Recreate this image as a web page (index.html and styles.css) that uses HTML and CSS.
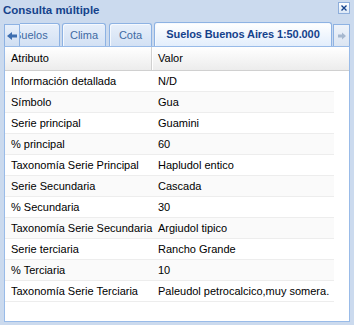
FILE: index.html
```html
<!DOCTYPE html>
<html lang="es">
<head>
<meta charset="utf-8">
<title>Consulta múltiple</title>
<link rel="stylesheet" href="styles.css">
</head>
<body>
<div class="win">
  <div class="titlebar">
    <span class="title">Consulta múltiple</span>
    <span class="close"><svg width="12" height="12" viewBox="0 0 12 12"><path d="M3 3 L9 9 M9 3 L3 9" stroke="#15428b" stroke-width="1.6" fill="none"/></svg></span>
  </div>
  <div class="tabbar">
    <div class="scroller left"><svg width="12" height="10" viewBox="0 0 12 10"><path d="M1 5 L6 1 L6 3.5 L11 3.5 L11 6.5 L6 6.5 L6 9 Z" fill="#3d6eb0"/></svg></div>
    <div class="tabs">
      <div class="tab first">Suelos</div>
      <div class="tab clima">Clima</div>
      <div class="tab cota">Cota</div>
      <div class="tab active">Suelos Buenos Aires 1:50.000</div>
    </div>
    <div class="scroller right"><svg width="10" height="10" viewBox="0 0 10 10"><path d="M9 5 L5 1.5 L5 3.5 L1 3.5 L1 6.5 L5 6.5 L5 8.5 Z" fill="#a6b8cf"/></svg></div>
  </div>
  <div class="body">
    <div class="ghead">
      <div class="c1">Atributo</div>
      <div class="c2">Valor</div>
    </div>
    <div class="rows">
      <div class="row"><div class="c1">Información detallada</div><div class="c2">N/D</div></div>
      <div class="row alt"><div class="c1">Símbolo</div><div class="c2">Gua</div></div>
      <div class="row"><div class="c1">Serie principal</div><div class="c2">Guamini</div></div>
      <div class="row alt"><div class="c1">% principal</div><div class="c2">60</div></div>
      <div class="row"><div class="c1">Taxonomía Serie Principal</div><div class="c2">Hapludol entico</div></div>
      <div class="row alt"><div class="c1">Serie Secundaria</div><div class="c2">Cascada</div></div>
      <div class="row"><div class="c1">% Secundaria</div><div class="c2">30</div></div>
      <div class="row alt"><div class="c1">Taxonomía Serie Secundaria</div><div class="c2">Argiudol tipico</div></div>
      <div class="row"><div class="c1">Serie terciaria</div><div class="c2">Rancho Grande</div></div>
      <div class="row alt"><div class="c1">% Terciaria</div><div class="c2">10</div></div>
      <div class="row"><div class="c1">Taxonomía Serie Terciaria</div><div class="c2">Paleudol petrocalcico,muy somera.</div></div>
    </div>
  </div>
</div>
</body>
</html>
```

FILE: styles.css
```css
html, body {
  margin: 0;
  padding: 0;
}
body {
  width: 354px;
  height: 325px;
  overflow: hidden;
  background: #cbdaee;
  font-family: "Liberation Sans", Arial, sans-serif;
  font-size: 11px;
}
.win {
  display: flex;
  flex-direction: column;
  height: 325px;
  padding: 0 4px 3px 4px;
  box-sizing: border-box;
}
.titlebar {
  height: 22px;
  display: flex;
  align-items: flex-start;
  justify-content: space-between;
}
.title {
  margin-top: 4px;
  margin-left: -1px;
  font-weight: bold;
  font-size: 11.5px;
  color: #15428b;
}
.close {
  margin-top: 2px;
  width: 12px;
  height: 12px;
  box-sizing: border-box;
  border: 1px solid #8eaedb;
  background: linear-gradient(#ffffff, #dce8f7);
  display: flex;
  align-items: center;
  justify-content: center;
}
.close svg { width: 10px; height: 10px; }
.tabbar {
  height: 24px;
  display: flex;
  align-items: flex-end;
}
.scroller {
  height: 22px;
  box-sizing: border-box;
  border: 1px solid #8db2e3;
  border-bottom: none;
  background: linear-gradient(#e8f0fb, #cfdef2);
  display: flex;
  align-items: center;
  justify-content: center;
}
.scroller.left { width: 16px; position: relative; z-index: 1; }
.scroller.right { width: 17px; margin-left: 1px; background: linear-gradient(#eef3fa, #dbe5f2); }
.tabs {
  flex: 1;
  display: flex;
  align-items: flex-end;
  overflow: hidden;
  height: 24px;
  gap: 2px;
}
.tab {
  flex: none;
  height: 23px;
  box-sizing: border-box;
  padding: 5px 0 0 0;
  text-align: center;
  border: 1px solid #8db2e3;
  border-bottom: none;
  border-radius: 3px 3px 0 0;
  background: linear-gradient(#e7effa, #d3e1f4);
  box-shadow: inset 1px 1px 0 #f5f9fe;
  color: #416aa3;
  white-space: nowrap;
}
.tab.first { margin-left: -18px; width: 58px; text-align: left; padding-left: 11px; }
.tab.clima { width: 44px; }
.tab.cota { width: 43px; margin-left: 1px; }
.tab.active {
  width: 178px;
  height: 24px;
  padding-top: 5px;
  font-weight: bold;
  font-size: 11px;
  letter-spacing: -0.1px;
  color: #15428b;
  background: linear-gradient(#ffffff, #e3eefc);
}
.body {
  flex: 1;
  border: 1px solid #99bbe8;
  background: #ffffff;
  overflow: hidden;
}
.ghead {
  display: flex;
  height: 24px;
  box-sizing: border-box;
  border-bottom: 1px solid #d0d0d0;
  background: linear-gradient(#ffffff, #ececec);
  color: #000;
}
.ghead .c1 {
  border-right: 1px solid #d0d0d0;
  box-shadow: 1px 0 0 #ffffff;
}
.ghead > div {
  line-height: 23px;
}
.c1 {
  width: 147px;
  padding-left: 6px;
  box-sizing: border-box;
}
.c2 {
  padding-left: 6px;
}
.rows {
  width: 329px;
}
.row {
  display: flex;
  height: 21px;
  box-sizing: border-box;
  border-bottom: 1px solid #ededed;
  line-height: 21px;
  color: #000;
  white-space: nowrap;
}
.row.alt { background: #fafafa; }
```
